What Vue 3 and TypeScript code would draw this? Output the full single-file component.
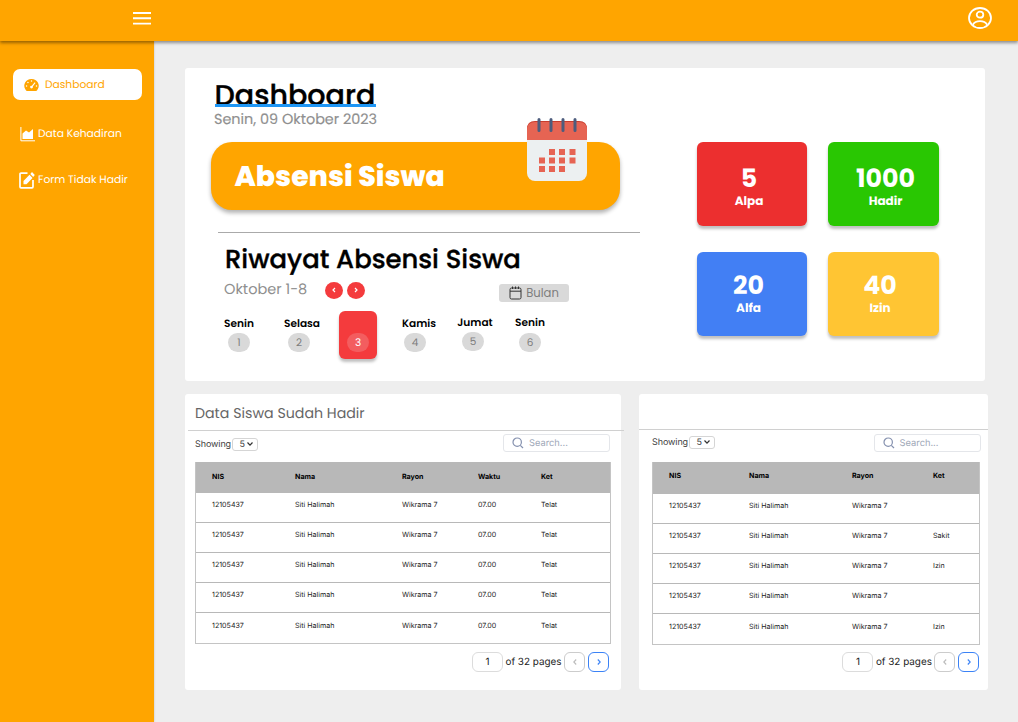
<script setup lang="ts">
interface Day { label: string; num: number; active?: boolean }
interface Stat { value: number; label: string; tone: string }
interface Panel { key: string; title: string; columns: string[]; rows: string[][] }

const days: Day[] = [
  { label: 'Senin', num: 1 },
  { label: 'Selasa', num: 2 },
  { label: '', num: 3, active: true },
  { label: 'Kamis', num: 4 },
  { label: 'Jumat', num: 5 },
  { label: 'Senin', num: 6 },
]

const stats: Stat[] = [
  { value: 5, label: 'Alpa', tone: 'red' },
  { value: 1000, label: 'Hadir', tone: 'green' },
  { value: 20, label: 'Alfa', tone: 'blue' },
  { value: 40, label: 'Izin', tone: 'yellow' },
]

const student = ['12105437', 'Siti Halimah', 'Wikrama 7']

const panels: Panel[] = [
  {
    key: 'present',
    title: 'Data Siswa Sudah Hadir',
    columns: ['NIS', 'Nama', 'Rayon', 'Waktu', 'Ket'],
    rows: Array.from({ length: 5 }, () => [...student, '07.00', 'Telat']),
  },
  {
    key: 'absent',
    title: '',
    columns: ['NIS', 'Nama', 'Rayon', 'Ket'],
    rows: ['', 'Sakit', 'Izin', '', 'Izin'].map((ket) => [...student, ket]),
  },
]
</script>

<template>
  <div class="app">
    <header class="topbar">
      <svg class="burger" viewBox="0 0 18 13"><path d="M0 1h18M0 6.300h18M0 11.600h18" stroke="#fff" stroke-width="1.900" /></svg>
      <svg class="avatar" viewBox="0 0 24 22" fill="none" stroke="#fff" stroke-width="1.800">
        <ellipse cx="12" cy="11" rx="11" ry="10" />
        <ellipse cx="12" cy="7.700" rx="3.300" ry="3" />
        <path d="M4.800 17.800C6.300 15.300 8.700 14.200 12 14.200s5.700 1.100 7.200 3.600" />
      </svg>
    </header>

    <div class="body">
      <nav class="sidebar">
        <a class="item active">
          <svg class="gauge" viewBox="0 0 16 14">
            <path d="M8 .5A7.500 7.300 0 0 0 1.700 12q.5 1.300 1.800 1.300h9q1.300 0 1.800-1.300A7.500 7.300 0 0 0 8 .5z" fill="#ffa500" />
            <g fill="#fff"><circle cx="8" cy="2.700" r=".8" /><circle cx="4.200" cy="4.300" r=".8" /><circle cx="2.700" cy="8" r=".8" /><circle cx="13.300" cy="8" r=".8" /><circle cx="8" cy="9.200" r="1.500" /></g>
            <path d="M8 9.200 11.800 4.500" stroke="#fff" stroke-width="1.200" />
          </svg>
          <span>Dashboard</span>
        </a>
        <a class="item second">
          <svg class="chart" viewBox="0 0 15 15"><path d="M.9 0v13.800H15" fill="none" stroke="#fff" stroke-width="1" /><path d="M2.500 12V6.500L6 3.500l3 2L13 2v10z" fill="#fff" /></svg>
          <span>Data Kehadiran</span>
        </a>
        <a class="item third">
          <svg class="edit" viewBox="0 0 16 18">
            <path d="M8.500 2.200H2q-1 0-1 1v12.600q0 1 1 1h11q1 0 1-1V9" fill="none" stroke="#fff" stroke-width="1.700" />
            <path d="M4.500 13.300V10l6-6.300 3 3.200-6 6.400zM11.300 2.900 13 1.100l2.800 3-1.600 1.800z" fill="#fff" />
          </svg>
          <span>Form Tidak Hadir</span>
        </a>
      </nav>

      <main class="content">
        <section class="hero">
          <div class="left">
            <h1>Dashboard</h1>
            <p class="date">Senin, 09 Oktober 2023</p>
            <div class="banner">
              <span>Absensi Siswa</span>
              <svg class="calendar" viewBox="0 0 60 63">
                <rect y="3" width="60" height="60" rx="8" fill="#ecf0f1" />
                <path d="M0 22V11q0-8 8-8h44q8 0 8 8v11z" fill="#c93c2c" />
                <path d="M0 22V12q0-8 8-8h44q8 0 8 8v10z" fill="#e66453" />
                <path d="M12 1.500v11M24 1.500v11M36 1.500v11M48 1.500v11" stroke="#4d5c7d" stroke-width="3" stroke-linecap="round" />
                <path d="M22 31h6v6h-6zm10 0h6v6h-6zm10.500 0h6v6h-6zM12 39.500h6v6h-6zm10 0h6v6h-6zm10 0h6v6h-6zm10.500 0h6v6h-6zM12 48h6v6h-6zm10 0h6v6h-6zm10 0h6v6h-6z" fill="#e66453" />
              </svg>
            </div>
            <hr />
            <h2>Riwayat Absensi Siswa</h2>
            <div class="period">
              <span class="range">Oktober 1-8</span>
              <button class="arrow"><svg viewBox="0 0 6 6"><path d="M4 1 2 3l2 2" /></svg></button>
              <button class="arrow"><svg viewBox="0 0 6 6"><path d="m2 1 2 2-2 2" /></svg></button>
              <button class="month">
                <svg viewBox="0 0 13 14" fill="none" stroke="#333"><rect x="1" y="2" width="11" height="11" rx="1.500" /><path d="M1 5.200h11M3.500.5v2.500M6.500.5v2.500M9.500.5v2.500" /></svg>
                <span>Bulan</span>
              </button>
            </div>
            <div class="days">
              <div v-for="day in days" :key="day.num" class="day" :class="['d' + day.num, { active: day.active }]">
                <b>{{ day.label }}</b>
                <i>{{ day.num }}</i>
              </div>
            </div>
          </div>
          <div class="stats">
            <div v-for="stat in stats" :key="stat.tone" class="stat" :class="stat.tone">
              <strong>{{ stat.value }}</strong>
              <span>{{ stat.label }}</span>
            </div>
          </div>
        </section>

        <div class="panels">
          <section v-for="panel in panels" :key="panel.key" class="panel" :class="panel.key">
            <h3>{{ panel.title }}</h3>
            <div class="rule"></div>
            <div class="tools">
              <span class="showing">Showing</span>
              <span class="select">5<svg viewBox="0 0 8 6"><path d="m1.500 1.500 2.500 2.700 2.500-2.700" fill="none" stroke="#333" stroke-width="1.200" /></svg></span>
              <label class="search">
                <svg viewBox="0 0 12 12" fill="none" stroke="#8490ae" stroke-width="1.200"><circle cx="5.200" cy="5.200" r="4.200" /><path d="m8.300 8.300 2.700 2.700" /></svg>
                <span>Search...</span>
              </label>
            </div>
            <div class="table">
              <div class="row head"><span v-for="col in panel.columns" :key="col">{{ col }}</span></div>
              <div v-for="(row, r) in panel.rows" :key="r" class="row"><span v-for="(cell, c) in row" :key="c">{{ cell }}</span></div>
            </div>
            <footer class="pager">
              <span class="page">1</span>
              <span class="of">of 32 pages</span>
              <button><svg viewBox="0 0 6 8"><path d="M4.200 1.500 1.800 4l2.400 2.500" /></svg></button>
              <button class="next"><svg viewBox="0 0 6 8"><path d="M1.800 1.500 4.200 4 1.800 6.500" /></svg></button>
            </footer>
          </section>
        </div>
      </main>
    </div>
  </div>
</template>

<style>
body { margin: 0; }
</style>

<style scoped>
* { box-sizing: border-box; }
.app { width: 1018px; height: 722px; overflow: hidden; background: #eee; font-family: Poppins, Inter, "Liberation Sans", sans-serif; text-rendering: geometricPrecision; display: flex; flex-direction: column; }
button { padding: 0; border: 0; font: inherit; display: flex; align-items: center; justify-content: center; }
h1, h2, h3, p, hr { margin: 0; }
span, h1, h2, h3, p, b { white-space: nowrap; }
svg { display: block; flex: none; }

.topbar { height: 41px; flex: none; background: #ffa500; box-shadow: 0 2px 3px rgba(0, 0, 0, .4); position: relative; z-index: 1; display: flex; justify-content: space-between; padding: 0 26px 0 133px; }
.burger { width: 18px; height: 13px; margin-top: 12px; }
.avatar { width: 24px; height: 22px; margin-top: 7px; }
.body { display: flex; flex: 1; min-height: 0; }
.sidebar { width: 154px; background: #ffa500; flex: none; padding: 28.400px 12px 0 13px; box-shadow: 0 0 2px rgba(0, 0, 0, .2); }
.item { display: flex; align-items: center; color: #fff; font-size: 10.700px; height: 30px; }
.item.active { background: #fff; color: #ffa500; border-radius: 7px; height: 31px; padding-left: 11px; gap: 6px; }
.second { margin-top: 19px; padding-left: 7px; gap: 3px; }
.third { margin-top: 16px; padding-left: 6px; gap: 3px; }
.gauge { width: 15px; height: 14px; }
.chart { width: 15px; height: 15px; }
.edit { width: 16px; height: 18px; }

.content { padding: 27px 0 0 31px; }
.hero { width: 800px; height: 313px; background: #fff; border-radius: 3px; display: flex; }
.left { width: 512px; padding: 14px 0 0 26px; flex: none; }
h1 { margin-left: 3.500px; width: 161px; height: 25px; line-height: 29px; font-size: 28.600px; font-weight: 500; -webkit-text-stroke: .35px #000; position: relative; }
h1::after { content: ""; position: absolute; left: 0; right: 0; bottom: 0; height: 2.800px; background: #1e96f5; }
.date { margin: 3px 0 0 3px; height: 20px; line-height: 20px; font-size: 14.400px; color: #8f8f8f; -webkit-text-stroke: .15px #8f8f8f; }
.banner { margin-top: 12px; width: 409px; height: 68px; background: #ffa500; border-radius: 21px; box-shadow: 0 3px 4px rgba(0, 0, 0, .3); position: relative; padding-left: 23.500px; line-height: 69px; color: #fff; font-size: 28.300px; font-weight: 800; }
.calendar { position: absolute; left: 316px; top: -24px; width: 60px; height: 63px; }
hr { border: 0; margin: 22px 0 0 7px; height: 1px; width: 422px; background: #aaa; }
h2 { margin: 11px 0 0 14px; height: 32px; line-height: 32px; font-size: 25.900px; font-weight: 500; -webkit-text-stroke: .35px #000; }
.period { display: flex; align-items: center; height: 22px; margin: 3px 0 0 13px; }
.range { width: 101px; font-size: 14.500px; line-height: 20px; color: #8f8f8f; }
.arrow { width: 18px; height: 17px; border-radius: 50%; background: #f43b3d; margin-right: 4px; }
.arrow svg { width: 6px; height: 6px; fill: none; stroke: #fff; stroke-width: 1.200; }
.month { margin: 5px 0 0 130px; width: 70px; height: 18px; border-radius: 3px; background: #d9d9d9; color: #7d7d7d; font-size: 11.600px; gap: 4px; }
.month svg { width: 13px; height: 14px; }
.month span { padding-top: 1px; }
.days { display: grid; grid-template-columns: 60px 60px 58px 56px 60px 54px; margin: 10px 0 0 -2px; width: 360px; }
.day { display: flex; flex-direction: column; align-items: center; height: 48px; }
.day b { height: 16px; line-height: 17px; font-size: 10.600px; font-weight: 600; margin-top: 4px; }
.day i { width: 22px; height: 19px; line-height: 19px; border-radius: 10px; background: #d9d9d9; color: #7d7d7d; font-size: 10.500px; font-style: normal; text-align: center; margin-top: 2px; }
.d2 b { position: relative; left: 3px; }
.d4 b { position: relative; left: 4px; }
.d5 b { position: relative; left: 2px; }
.d5 b, .d6 b { margin-top: 3px; }
.d5 i { margin-top: 2px; }
.d6 i { margin-top: 3px; }
.active.day { background: #f43b3d; border-radius: 6px; width: 38px; justify-self: center; box-shadow: 0 3px 3px rgba(0, 0, 0, .25); }
.active i { background: #f35d5f; color: #fff; }

.stats { display: grid; grid-template-columns: 110px 111px; grid-template-rows: 84px 84px; gap: 26px 21px; padding-top: 74px; }
.stat { border-radius: 6px; color: #fff; display: flex; flex-direction: column; align-items: center; padding-top: 21px; box-shadow: 0 3px 3px rgba(0, 0, 0, .25); }
.stat strong { font-size: 25.300px; line-height: 31px; font-weight: 700; }
.stat span { font-size: 12px; line-height: 16px; font-weight: 700; }
.red { background: #ec2f2f; padding-right: 6px; }
.green { background: #29c702; padding-left: 4px; }
.blue { background: #427ff4; padding-top: 18px; padding-right: 7px; }
.yellow { background: #ffc533; padding-top: 18px; padding-right: 7px; }

.panels { display: flex; gap: 18px; margin-top: 13px; font-family: Inter, "Liberation Sans", sans-serif; }
.panel { background: #fff; height: 296px; border-radius: 3px; }
.present { width: 436px; padding: 0 10px; }
.absent { width: 349px; padding: 0 8px 0 13px; }
h3 { height: 35px; font: 400 14.200px/38px Poppins, Inter, sans-serif; color: #666; }
.rule { height: 1px; background: #d0d0d0; }
.present .rule { width: 436px; margin-left: -7px; margin-top: 1px; }
.absent .rule { width: 349px; margin-left: -13px; margin-bottom: 1px; }
.tools { display: flex; align-items: center; height: 23px; color: #444; font-size: 9px; }
.showing { width: 36.500px; letter-spacing: -.1px; }
.select { width: 26px; height: 13px; border: 1px solid #d5d5d5; border-radius: 3px; display: flex; align-items: center; padding-left: 7px; gap: 1px; }
.select svg { width: 8px; height: 6px; }
.present .showing, .present .select { margin-top: 3px; }
.absent .showing, .absent .select { margin-bottom: 1px; }
.search { margin-left: auto; width: 107px; height: 18px; border: 1px solid #e4e6ea; border-radius: 3px; display: flex; align-items: center; padding-left: 8px; gap: 5px; color: #a0a8b8; font-size: 9.300px; }
.search span { padding-top: 1px; }
.present .search { margin-right: 1px; }
.absent .search { margin-right: -.600px; }
.search svg { width: 12px; height: 12px; }
.table { border: 1px solid #c4c4c4; border-top: 0; margin-top: 8px; color: #222; font-size: 7.100px; }
.row { display: grid; align-items: center; height: 30.200px; border-bottom: 1px solid #b8b8b8; padding-bottom: 6px; }
.row:last-child { border-bottom: 0; }
.row.head { background: #b8b8b8; color: #000; font-weight: 700; height: 30.500px; padding-bottom: 0; }
.present .row { grid-template-columns: 83px 107px 76px 63px auto; padding-left: 16px; }
.absent .row { grid-template-columns: 80px 103px 81px auto; padding-left: 16px; padding-bottom: 6px; height: 30.100px; }
.absent .row.head { height: 31.600px; padding-bottom: 3px; }
.pager { display: flex; justify-content: flex-end; align-items: center; height: 20px; margin-top: 8px; font-size: 9.900px; color: #222; }
.present .pager { padding-right: 2px; }
.absent .pager { padding-right: .600px; margin-top: 7px; }
.page { width: 31px; height: 20px; border: 1px solid #dcdcdc; border-radius: 6px; text-align: center; line-height: 19px; }
.of { width: 58.500px; margin-left: 2.500px; }
.pager button { width: 21px; height: 20px; border: 1px solid #ccc; border-radius: 6px; background: #fff; }
.pager .next { border-color: #3b82f6; margin-left: 3px; }
.pager svg { width: 6px; height: 8px; fill: none; stroke: #bbb; stroke-width: 1.100; }
.pager .next svg { stroke: #3b82f6; }
</style>
